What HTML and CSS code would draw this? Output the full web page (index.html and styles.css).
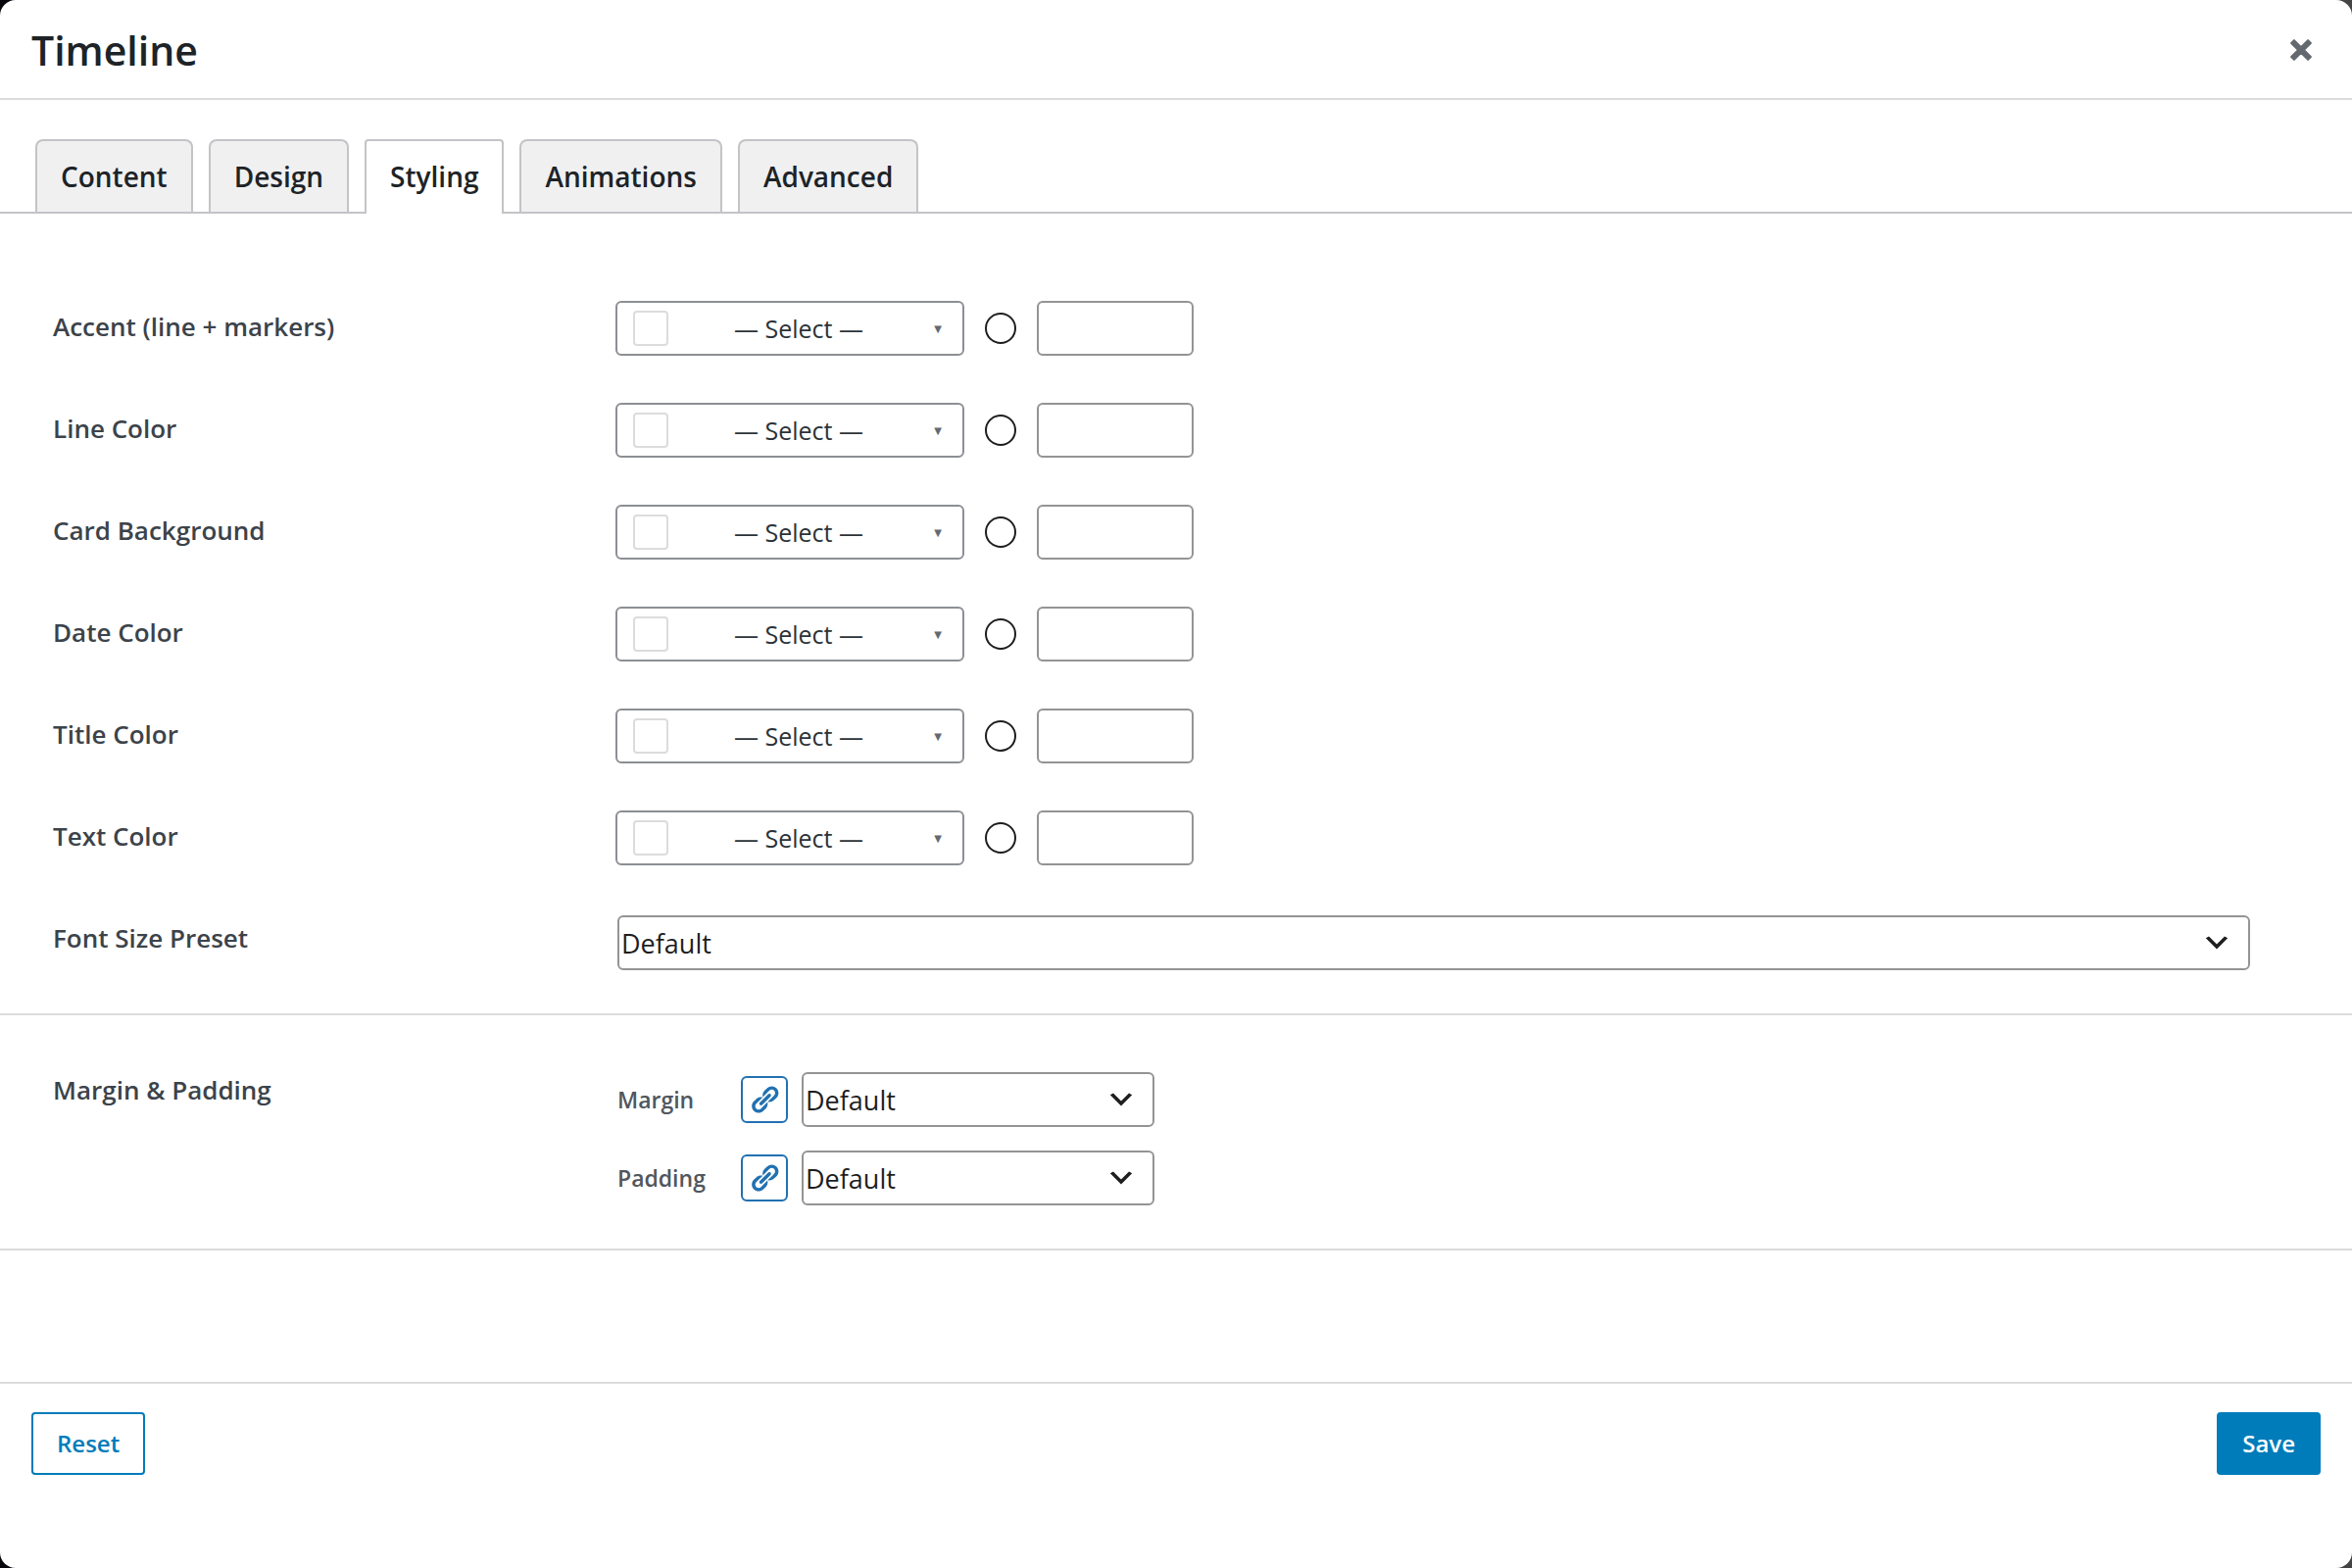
FILE: index.html
```html
<!DOCTYPE html>
<html lang="en">
<head>
<meta charset="utf-8">
<meta name="viewport" content="width=device-width, initial-scale=1">
<title>Timeline</title>
<link rel="stylesheet" href="styles.css">
</head>
<body>
<svg class="sprite" aria-hidden="true">
  <symbol id="icon-link" viewBox="0 0 20 20"><path d="M17.74 2.76c1.68 1.69 1.68 4.41 0 6.1l-1.53 1.52c-1.12 1.12-2.7 1.47-4.14 1.09l2.62-2.61.76-.77.76-.76c.84-.84.84-2.2 0-3.04-.84-.85-2.2-.85-3.04 0l-.77.76-3.38 3.38c-.37-1.44-.02-3.02 1.1-4.14l1.52-1.53c1.69-1.68 4.42-1.68 6.1 0zM8.59 13.43l5.34-5.34c.42-.42.42-1.1 0-1.52-.44-.43-1.13-.39-1.53 0l-5.33 5.34c-.42.42-.42 1.1 0 1.52.44.43 1.13.39 1.52 0zm-.76 2.29l4.14-4.15c.38 1.44.03 3.02-1.09 4.14l-1.52 1.53c-1.69 1.68-4.41 1.68-6.1 0-1.68-1.68-1.68-4.42 0-6.1l1.53-1.52c1.12-1.12 2.7-1.47 4.14-1.1l-4.14 4.15c-.85.84-.85 2.2 0 3.05.84.84 2.2.84 3.04 0z"/></symbol>
  <symbol id="icon-chevron" viewBox="0 0 20 20"><path d="M5 6l5 5 5-5 2 1-7 7-7-7 2-1z"/></symbol>
</svg>
<main class="modal">
  <header class="modal-header">
    <h1 class="modal-title">Timeline</h1>
    <button class="close" type="button" aria-label="Close">
      <svg class="close-icon" viewBox="0 0 20 20" aria-hidden="true"><path d="M14.95 6.46L11.41 10l3.54 3.54-1.41 1.41L10 11.42l-3.53 3.53-1.42-1.42L8.58 10 5.05 6.47l1.42-1.42L10 8.58l3.54-3.53z"/></svg>
    </button>
  </header>

  <nav class="tabs">
    <button class="tab" type="button">Content</button>
    <button class="tab" type="button">Design</button>
    <button class="tab tab-active" type="button">Styling</button>
    <button class="tab" type="button">Animations</button>
    <button class="tab" type="button">Advanced</button>
  </nav>

  <div class="panel">
    <section class="section section-colors">
      <div class="row">
        <label class="label" for="accent">Accent (line + markers)</label>
        <div class="color-field">
          <button class="preset" type="button"><span class="swatch"></span><span>— Select —</span><span class="arrow">▼</span></button>
          <button class="picker" type="button" aria-label="Pick accent color"></button>
          <input class="hex" id="accent" type="text">
        </div>
      </div>
      <div class="row">
        <label class="label" for="line">Line Color</label>
        <div class="color-field">
          <button class="preset" type="button"><span class="swatch"></span><span>— Select —</span><span class="arrow">▼</span></button>
          <button class="picker" type="button" aria-label="Pick line color"></button>
          <input class="hex" id="line" type="text">
        </div>
      </div>
      <div class="row">
        <label class="label" for="card">Card Background</label>
        <div class="color-field">
          <button class="preset" type="button"><span class="swatch"></span><span>— Select —</span><span class="arrow">▼</span></button>
          <button class="picker" type="button" aria-label="Pick card background"></button>
          <input class="hex" id="card" type="text">
        </div>
      </div>
      <div class="row">
        <label class="label" for="date">Date Color</label>
        <div class="color-field">
          <button class="preset" type="button"><span class="swatch"></span><span>— Select —</span><span class="arrow">▼</span></button>
          <button class="picker" type="button" aria-label="Pick date color"></button>
          <input class="hex" id="date" type="text">
        </div>
      </div>
      <div class="row">
        <label class="label" for="title">Title Color</label>
        <div class="color-field">
          <button class="preset" type="button"><span class="swatch"></span><span>— Select —</span><span class="arrow">▼</span></button>
          <button class="picker" type="button" aria-label="Pick title color"></button>
          <input class="hex" id="title" type="text">
        </div>
      </div>
      <div class="row">
        <label class="label" for="text">Text Color</label>
        <div class="color-field">
          <button class="preset" type="button"><span class="swatch"></span><span>— Select —</span><span class="arrow">▼</span></button>
          <button class="picker" type="button" aria-label="Pick text color"></button>
          <input class="hex" id="text" type="text">
        </div>
      </div>
      <div class="row">
        <label class="label" for="font-size">Font Size Preset</label>
        <div class="select-field">
          <div class="select">
            <select class="select-input" id="font-size"><option>Default</option></select>
            <svg class="chevron" aria-hidden="true"><use href="#icon-chevron"/></svg>
          </div>
        </div>
      </div>
    </section>

    <section class="section section-spacing">
      <div class="row">
        <h2 class="label label-group">Margin &amp; Padding</h2>
        <div class="spacing-list">
          <div class="spacing">
            <label class="spacing-label" for="margin">Margin</label>
            <button class="link-toggle" type="button" aria-label="Link margin sides"><svg class="link-icon" aria-hidden="true"><use href="#icon-link"/></svg></button>
            <div class="select">
              <select class="select-input" id="margin"><option>Default</option></select>
              <svg class="chevron" aria-hidden="true"><use href="#icon-chevron"/></svg>
            </div>
          </div>
          <div class="spacing">
            <label class="spacing-label" for="padding">Padding</label>
            <button class="link-toggle" type="button" aria-label="Link padding sides"><svg class="link-icon" aria-hidden="true"><use href="#icon-link"/></svg></button>
            <div class="select">
              <select class="select-input" id="padding"><option>Default</option></select>
              <svg class="chevron" aria-hidden="true"><use href="#icon-chevron"/></svg>
            </div>
          </div>
        </div>
      </div>
    </section>
  </div>

  <footer class="modal-footer">
    <button class="button button-outline" type="button">Reset</button>
    <button class="button button-primary" type="button">Save</button>
  </footer>
</main>
</body>
</html>
```
FILE: styles.css
```css
*,
*::before,
*::after {
  box-sizing: border-box;
}

body {
  margin: 0;
  background: linear-gradient(90deg, #08080c, #444444);
  color: #1d2327;
  font-family: "Segoe UI", "Open Sans", "Noto Sans", sans-serif;
  font-size: 26px;
}

button,
input,
select {
  margin: 0;
  font: inherit;
  color: inherit;
}

.sprite {
  display: none;
}

.modal {
  display: flex;
  flex-direction: column;
  min-height: 100vh;
  background: #ffffff;
  border-radius: 16px;
}

.modal-header {
  display: flex;
  align-items: center;
  justify-content: space-between;
  padding: 22px 32px 20px;
  border-bottom: 2px solid #dcdcde;
}

.modal-title {
  margin: 0;
  font-size: 41px;
  font-weight: 600;
  line-height: 58px;
}

.close {
  display: flex;
  padding: 0;
  border: 0;
  background: none;
}

.close-icon {
  width: 40px;
  height: 40px;
  fill: #646970;
  stroke: #646970;
  stroke-width: 1;
  stroke-linejoin: round;
}

.tabs {
  display: flex;
  gap: 16px;
  padding: 40px 36px 0;
  border-bottom: 2px solid #c3c4c7;
}

.tab {
  padding: 16px 24px;
  border: 2px solid #c3c4c7;
  border-bottom: 0;
  border-radius: 8px 8px 0 0;
  background: #f0f0f1;
  font-size: 28px;
  font-weight: 600;
  line-height: 40px;
}

.tab-active {
  margin-bottom: -2px;
  padding-bottom: 18px;
  border-radius: 4px 4px 0 0;
  background: #ffffff;
}

.panel {
  flex: 1;
}

.section {
  padding-right: 104px;
  padding-left: 54px;
  border-bottom: 2px solid #dcdcde;
}

.section-colors {
  display: grid;
  gap: 48px;
  padding-top: 89px;
  padding-bottom: 44px;
}

.section-spacing {
  padding-top: 58px;
  padding-bottom: 44px;
}

.row {
  display: grid;
  grid-template-columns: 574px 1fr;
  align-items: start;
}

.label {
  margin: 0;
  padding-top: 8px;
  color: #3c434a;
  font-size: 26px;
  font-weight: 600;
  line-height: 36px;
}

.label-group {
  padding-top: 0;
}

.color-field {
  display: flex;
  align-items: center;
  gap: 21px;
}

.preset {
  display: flex;
  align-items: center;
  justify-content: space-between;
  width: 356px;
  height: 56px;
  padding: 0 16px;
  border: 2px solid #8c8f94;
  border-radius: 6px;
  background: #ffffff;
  color: #2c3338;
  font-size: 25px;
}

.swatch {
  width: 36px;
  height: 36px;
  border: 2px solid #dcdcde;
  border-radius: 4px;
}

.arrow {
  width: 18px;
  color: #646970;
  font-family: "DejaVu Sans", sans-serif;
  font-size: 10px;
  text-align: center;
}

.picker {
  width: 32px;
  height: 32px;
  padding: 0;
  border: 2px solid #1e1e1e;
  border-radius: 50%;
  background: #ffffff;
}

.hex {
  width: 160px;
  height: 56px;
  padding: 0 12px;
  border: 2px solid #949494;
  border-radius: 6px;
  background: #ffffff;
}

.select-field {
  padding-top: 3px;
  padding-left: 2px;
}

.select {
  display: grid;
  align-items: center;
}

.select-input {
  grid-area: 1 / 1;
  width: 100%;
  height: 56px;
  padding: 0 48px 0 2px;
  border: 2px solid #949494;
  border-radius: 6px;
  background: #ffffff;
  color: #1e1e1e;
  font-size: 27px;
  appearance: none;
}

.chevron {
  grid-area: 1 / 1;
  justify-self: end;
  width: 32px;
  height: 32px;
  margin-right: 18px;
  fill: #1e1e1e;
  pointer-events: none;
}

.spacing-list {
  display: grid;
  gap: 24px;
  padding-left: 2px;
}

.spacing {
  display: grid;
  grid-template-columns: 112px 48px 360px;
  column-gap: 14px;
  align-items: center;
}

.spacing-label {
  color: #50575e;
  font-size: 23px;
  font-weight: 600;
}

.link-toggle {
  display: flex;
  align-items: center;
  justify-content: center;
  width: 48px;
  height: 48px;
  padding: 0;
  border: 2px solid #2271b1;
  border-radius: 6px;
  background: #ffffff;
}

.link-icon {
  width: 32px;
  height: 32px;
  fill: #2271b1;
}

.modal-footer {
  display: flex;
  align-items: flex-start;
  justify-content: space-between;
  padding: 29px 32px 95px;
  border-top: 2px solid #dcdcde;
}

.button {
  padding: 12px 24px;
  border: 2px solid #007cba;
  border-radius: 4px;
  font-size: 24px;
  font-weight: 600;
  line-height: 36px;
}

.button-outline {
  background: #ffffff;
  color: #007cba;
}

.button-primary {
  background: #007cba;
  color: #ffffff;
}
```
